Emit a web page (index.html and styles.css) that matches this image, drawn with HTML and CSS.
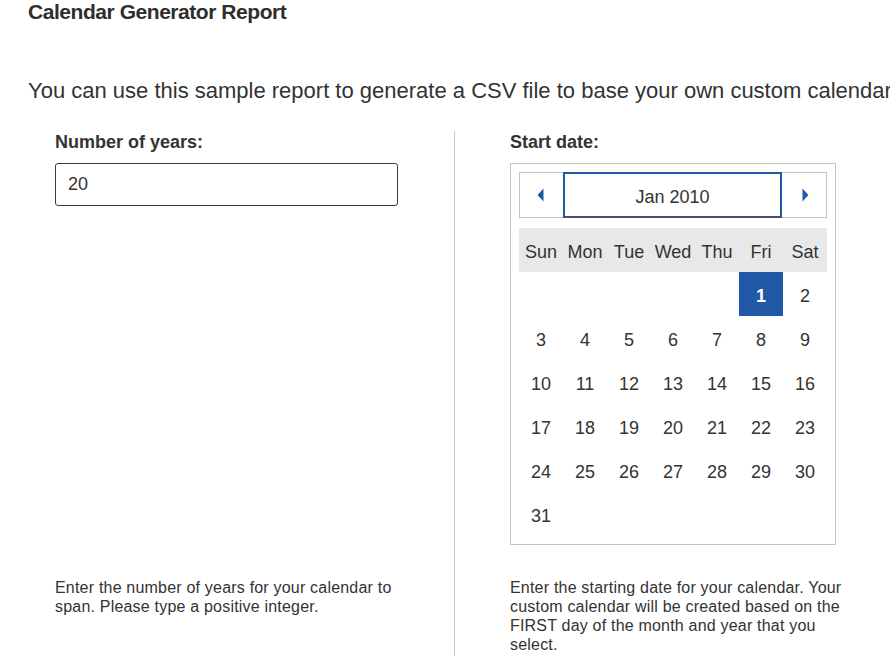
FILE: index.html
```html
<!DOCTYPE html>
<html lang="en">
<head>
<meta charset="utf-8">
<title>Calendar Generator Report</title>
<link rel="stylesheet" href="styles.css">
</head>
<body>
<div class="page">
  <h1 class="title">Calendar Generator Report</h1>
  <p class="intro">You can use this sample report to generate a CSV file to base your own custom calendar on.</p>
  <div class="form-grid">
    <div class="cell cell-left">
      <label class="label" for="years">Number of years:</label>
      <input id="years" class="text-input" type="text" value="20">
    </div>
    <div class="cell cell-right">
      <div class="label">Start date:</div>
      <div class="calendar">
        <div class="cal-nav">
          <div class="nav-btn nav-prev"><svg width="7" height="14" viewBox="0 0 7 14"><polygon points="6.5,0.5 0.5,7 6.5,13.5" fill="#2058a5"/></svg></div>
          <div class="nav-month">Jan 2010</div>
          <div class="nav-btn nav-next"><svg width="7" height="14" viewBox="0 0 7 14"><polygon points="0.5,0.5 6.5,7 0.5,13.5" fill="#2058a5"/></svg></div>
        </div>
        <div class="cal-head">
          <span>Sun</span><span>Mon</span><span>Tue</span><span>Wed</span><span>Thu</span><span>Fri</span><span>Sat</span>
        </div>
        <div class="cal-days">
          <span></span><span></span><span></span><span></span><span></span><span class="selected">1</span><span>2</span>
          <span>3</span><span>4</span><span>5</span><span>6</span><span>7</span><span>8</span><span>9</span>
          <span>10</span><span>11</span><span>12</span><span>13</span><span>14</span><span>15</span><span>16</span>
          <span>17</span><span>18</span><span>19</span><span>20</span><span>21</span><span>22</span><span>23</span>
          <span>24</span><span>25</span><span>26</span><span>27</span><span>28</span><span>29</span><span>30</span>
          <span>31</span>
        </div>
      </div>
    </div>
    <div class="cell cell-left help">
      Enter the number of years for your calendar to span. Please type a positive integer.
    </div>
    <div class="cell cell-right help">
      Enter the starting date for your calendar. Your custom calendar will be created based on the FIRST day of the month and year that you select.
    </div>
  </div>
</div>
</body>
</html>
```
FILE: styles.css
```css
html, body {
  margin: 0;
  padding: 0;
  background: #ffffff;
  overflow: hidden;
}
body {
  font-family: "Liberation Sans", Arial, Helvetica, sans-serif;
  color: #333333;
}
.page {
  padding-left: 28px;
}
.title {
  margin: 0;
  font-size: 21px;
  line-height: 24px;
  font-weight: bold;
  letter-spacing: -0.45px;
  color: #2e2e2e;
}
.intro {
  margin: 54px 0 0 0;
  font-size: 22px;
  line-height: 26px;
  white-space: nowrap;
  color: #333333;
}
.form-grid {
  margin-top: 27px;
  display: grid;
  grid-template-columns: 426px 1fr;
}
.cell-left {
  padding-left: 27px;
  width: 343px;
}
.cell-right {
  border-left: 1px solid #c9c9c9;
  padding-left: 55px;
  width: 343px;
}
.label {
  display: block;
  font-size: 18px;
  line-height: 22px;
  font-weight: bold;
  color: #333333;
  margin-bottom: 10px;
}
.text-input {
  box-sizing: border-box;
  display: block;
  width: 343px;
  height: 43px;
  margin: 0;
  padding: 0 12px;
  border: 1px solid #3a3a3a;
  border-radius: 3px;
  font-family: "Liberation Sans", Arial, sans-serif;
  font-size: 18px;
  color: #333333;
  background: #ffffff;
  outline: none;
}
.calendar {
  box-sizing: border-box;
  width: 326px;
  border: 1px solid #c4c4c4;
  padding: 8px;
}
.cal-nav {
  display: flex;
  height: 46px;
}
.nav-btn {
  box-sizing: border-box;
  height: 46px;
  border: 1px solid #c4c4c4;
  display: flex;
  align-items: center;
  justify-content: center;
}
.nav-prev {
  width: 44px;
  border-right: none;
  padding-right: 2px;
}
.nav-next {
  width: 45px;
  border-left: none;
  padding-left: 2px;
}
.nav-month {
  box-sizing: border-box;
  width: 219px;
  height: 46px;
  border: 2px solid #2058a5;
  border-bottom-color: #43516a;
  padding-top: 4px;
  text-align: center;
  line-height: 38px;
  font-size: 18px;
  color: #333333;
}
.cal-head {
  margin-top: 10px;
  display: grid;
  grid-template-columns: repeat(7, 44px);
  background: #e8e8e8;
}
.cal-head span,
.cal-days span {
  box-sizing: border-box;
  display: block;
  height: 44px;
  padding-top: 4px;
  line-height: 40px;
  text-align: center;
  font-size: 18px;
  color: #333333;
}
.cal-days {
  display: grid;
  grid-template-columns: repeat(7, 44px);
}
.cal-days .selected {
  background: #2058a5;
  color: #ffffff;
  font-weight: bold;
}
.help {
  padding-top: 33px;
  padding-bottom: 12px;
  font-size: 16px;
  line-height: 19px;
  letter-spacing: 0.2px;
  color: #333333;
}
```
